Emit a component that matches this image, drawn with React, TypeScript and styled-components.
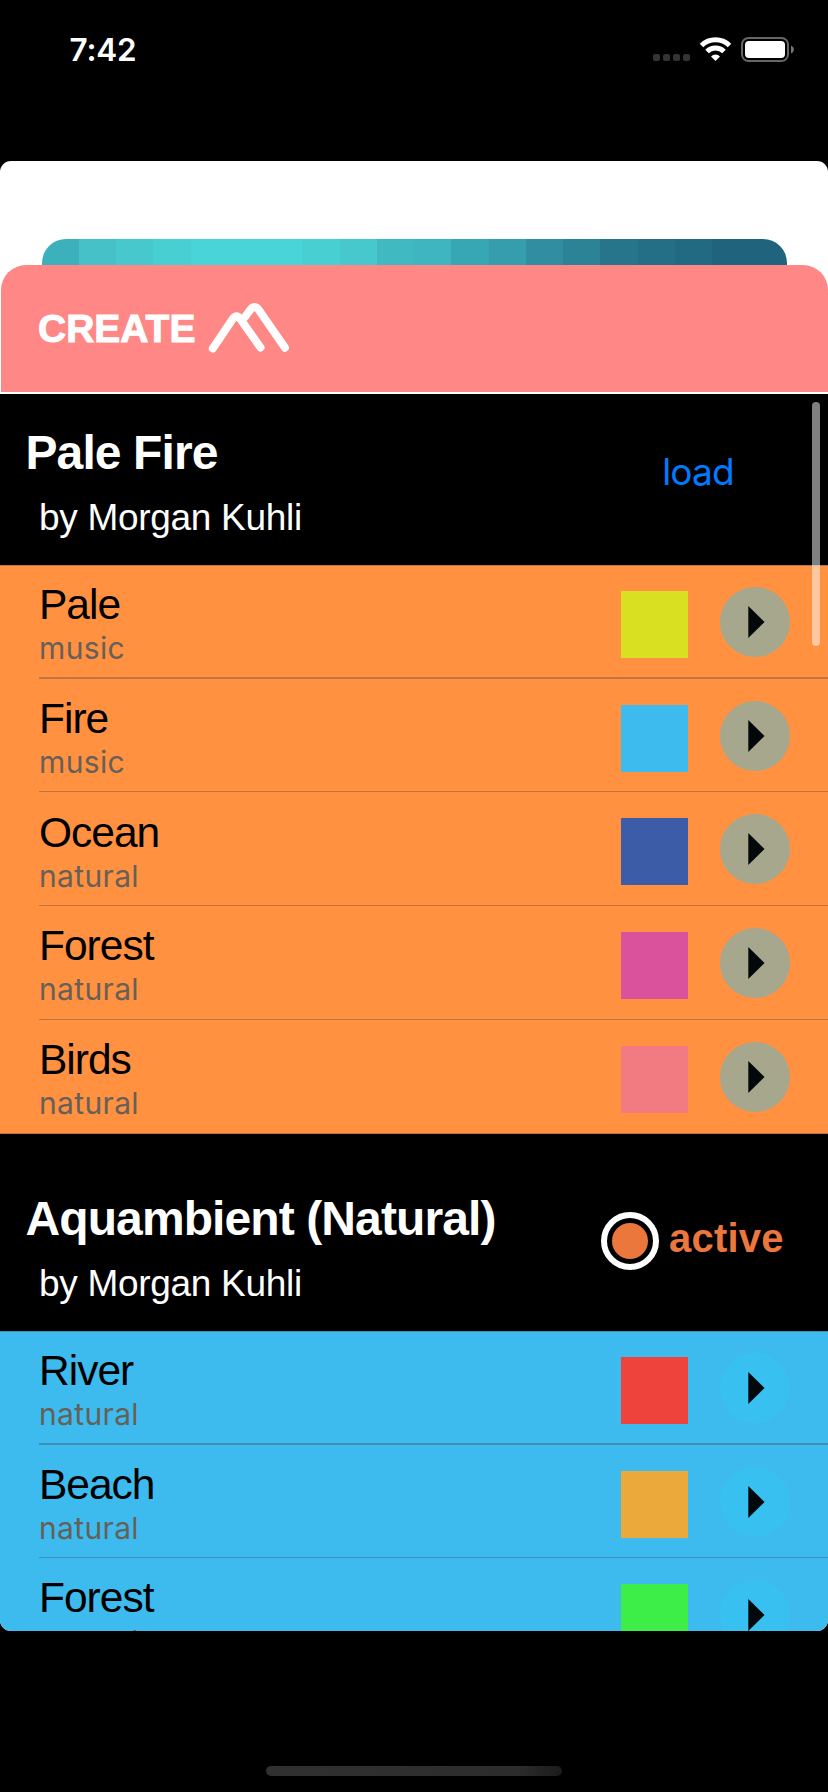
import React from 'react';
import styled, { createGlobalStyle } from 'styled-components';

const GlobalStyle = createGlobalStyle`
  * { box-sizing: border-box; }
  body { margin: 0; background: #000; font-family: "Liberation Sans", Arial, sans-serif; }
`;

const Screen = styled.div`
  position: relative;
  display: flex;
  flex-direction: column;
  width: 828px;
  height: 1792px;
  background: #000;
  overflow: hidden;
`;

const StatusBar = styled.header`
  display: flex;
  justify-content: space-between;
  align-items: flex-start;
  flex: none;
  height: 161px;
  padding: 30px 34px 0 69.5px;
`;

const Clock = styled.time`
  font: 600 31.5px/40px Inter, sans-serif;
  letter-spacing: -0.2px;
  color: #fff;
`;

const StatusIcons = styled.svg`
  display: block;
  margin-top: 5px;
`;

const Card = styled.main`
  position: relative;
  display: flex;
  flex-direction: column;
  flex: none;
  height: 1470px;
  padding-top: 78px;
  background: #fff;
  border-radius: 11px;
  overflow: hidden;
`;

const Stripes = styled.div`
  display: flex;
  flex: none;
  height: 26px;
  margin: 0 41.5px;
  border-radius: 24px 24px 0 0;
  overflow: hidden;
`;

const Stripe = styled.span<{ $color: string }>`
  flex: 1;
  background: ${p => p.$color};
`;

const CreateBar = styled.div`
  display: flex;
  align-items: flex-start;
  flex: none;
  height: 127.4px;
  margin: 0 0 1.6px 1px;
  padding: 36px 0 0 37px;
  background: #ff8786;
  border-radius: 25px 25px 0 0;
`;

const CreateTitle = styled.h1`
  margin: 5px 0 0;
  width: 170px;
  font-size: 39px;
  line-height: 46px;
  color: #fff;
  -webkit-text-stroke: 1px #fff;
`;

const GroupHeader = styled.div<{ $tall?: boolean }>`
  display: flex;
  justify-content: space-between;
  flex: none;
  height: ${p => (p.$tall ? 197.1 : 171)}px;
  padding-top: ${p => (p.$tall ? 60.3 : 34.5)}px;
  background: #000;
`;

const GroupText = styled.div`
  padding-left: 25.5px;
`;

const GroupName = styled.h2`
  margin: 0;
  font-size: 48px;
  line-height: 50px;
  letter-spacing: -0.9px;
  color: #fff;
  white-space: nowrap;
`;

const Author = styled.p`
  margin: 18.7px 0 0 13.5px;
  font-size: 37px;
  line-height: 42px;
  letter-spacing: -0.3px;
  color: #fff;
  white-space: nowrap;
`;

const LoadButton = styled.button`
  align-self: flex-start;
  width: 76px;
  margin: 18px 92px 0 0;
  padding: 0;
  border: 0;
  background: none;
  font: 400 37px/52px Inter, sans-serif;
  letter-spacing: -0.8px;
  color: #007aff;
`;

const ActiveBadge = styled.div`
  display: flex;
  align-items: flex-start;
  width: 227px;
  padding-top: 18px;
`;

const Ring = styled.span`
  display: flex;
  align-items: center;
  justify-content: center;
  width: 58px;
  height: 58px;
  border: 6.5px solid #fff;
  border-radius: 50%;
  &::after {
    content: '';
    width: 36px;
    height: 36px;
    border-radius: 50%;
    background: #eb773c;
  }
`;

const ActiveLabel = styled.span`
  margin: 4px 0 0 10px;
  font-size: 40px;
  font-weight: 700;
  line-height: 44px;
  letter-spacing: 0.2px;
  color: #eb773c;
`;

const List = styled.ul<{ $color: string }>`
  flex: none;
  margin: 0;
  padding: 0;
  list-style: none;
  background: ${p => p.$color};
  box-shadow: inset 0 1px rgba(60, 60, 67, 0.33), inset 0 -1px rgba(60, 60, 67, 0.33);
`;

const Row = styled.li`
  display: flex;
  align-items: flex-start;
  height: 113.75px;
  padding-left: 39px;
`;

const RowBody = styled.div<{ $line: number }>`
  display: flex;
  align-items: flex-start;
  width: 789px;
  height: 113.75px;
  border-bottom: ${p => p.$line}px solid rgba(60, 60, 67, 0.33);
`;

const Labels = styled.div`
  width: 582px;
  padding: 16.1px 0 0;
`;

const Name = styled.div`
  font-size: 42.5px;
  line-height: 48px;
  letter-spacing: -1px;
  color: #000;
`;

const Kind = styled.div`
  font: 400 30px/38px Inter, sans-serif;
  letter-spacing: 0.35px;
  color: #666058;
`;

const Swatch = styled.span<{ $color: string }>`
  width: 67px;
  height: 67px;
  margin-top: 26px;
  background: ${p => p.$color};
`;

const PlayButton = styled.button<{ $color: string }>`
  width: 70px;
  height: 70px;
  margin: 22px 0 0 31.5px;
  padding: 0;
  border: 0;
  border-radius: 50%;
  background: ${p => p.$color};
`;

const ScrollThumb = styled.div`
  position: absolute;
  top: 241px;
  right: 8px;
  width: 8px;
  height: 244px;
  border-radius: 4px;
  background: rgba(255, 255, 255, 0.5);
`;

const HomeIndicator = styled.div`
  width: 296px;
  height: 10px;
  margin: 135px auto 0;
  border-radius: 5px;
  background: linear-gradient(100deg, #303030 0%, #2c2c2c 85%, #1b1b1b 100%);
`;

const stripeColors = [
  '#3db1bb', '#45c1c7', '#47c8cc', '#48cfd2', '#49d5d8', '#49d5d8', '#49d5d8', '#48cfd2', '#46c8cd', '#41b9c1',
  '#3fb5bf', '#38a7b4', '#359dab', '#308ea0', '#2c8396', '#27758b', '#246f86', '#216a82', '#1f637c', '#1f637c',
];

interface Sound { name: string; kind: string; color: string }

const paleFire: Sound[] = [
  { name: 'Pale', kind: 'music', color: '#d9e021' },
  { name: 'Fire', kind: 'music', color: '#3dbbee' },
  { name: 'Ocean', kind: 'natural', color: '#3c5ca8' },
  { name: 'Forest', kind: 'natural', color: '#d9529b' },
  { name: 'Birds', kind: 'natural', color: '#f17b80' },
];

const aquambient: Sound[] = [
  { name: 'River', kind: 'natural', color: '#ee423d' },
  { name: 'Beach', kind: 'natural', color: '#eba93b' },
  { name: 'Forest', kind: 'natural', color: '#3dee49' },
];

function SoundList({ sounds, color, playColor }: { sounds: Sound[]; color: string; playColor: string }) {
  return (
    <List $color={color}>
      {sounds.map((s, i) => (
        <Row key={s.name}>
          <RowBody $line={i === 0 ? 2 : i === sounds.length - 1 ? 0 : 1}>
            <Labels>
              <Name>{s.name}</Name>
              <Kind>{s.kind}</Kind>
            </Labels>
            <Swatch $color={s.color} />
            <PlayButton $color={playColor} aria-label={`Play ${s.name}`}>
              <svg width="70" height="70" viewBox="0 0 70 70" display="block">
                <path d="M28.3 19V51L44.5 35Z" fill="#03080a" />
              </svg>
            </PlayButton>
          </RowBody>
        </Row>
      ))}
    </List>
  );
}

export default function App() {
  return (
    <Screen>
      <GlobalStyle />
      <StatusBar>
        <Clock>7:42</Clock>
        <StatusIcons width="142" height="28" viewBox="0 0 142 28">
          <g fill="#343434">
            {[0, 10, 20, 30].map(x => (
              <rect key={x} x={1 + x} y="19" width="7" height="7" rx="2" />
            ))}
          </g>
          <g fill="none" stroke="#fff" strokeWidth="5">
            <path d="M49.5 10.5A20 20 0 0 1 77.5 10.5" />
            <path d="M55 16.5A12.2 12.2 0 0 1 72 16.5" />
          </g>
          <path d="M63.5 26L59 21.4A6.3 6.3 0 0 1 68 21.4Z" fill="#fff" />
          <rect x="90" y="3" width="46" height="23" rx="6.5" fill="none" stroke="#666" strokeWidth="2" />
          <rect x="93" y="6" width="40" height="17" rx="4" fill="#fff" />
          <path d="M139 10.5Q142 12 142 14.5T139 18.5Z" fill="#777" />
        </StatusIcons>
      </StatusBar>
      <Card>
        <Stripes>
          {stripeColors.map((c, i) => <Stripe key={i} $color={c} />)}
        </Stripes>
        <CreateBar>
          <CreateTitle>CREATE</CreateTitle>
          <svg width="82" height="52" viewBox="0 0 82 52">
            <g fill="none" stroke="#fff" strokeWidth="8" strokeLinecap="round" strokeLinejoin="round">
              <path d="M4.8 47.5L25 17.5Q28.5 13 32 17.5L52.5 46.5" />
              <path d="M37 16L42.5 8.5Q46.5 3.5 50.5 8.5L77 46.7" />
            </g>
          </svg>
        </CreateBar>
        <GroupHeader>
          <GroupText>
            <GroupName>Pale Fire</GroupName>
            <Author>by Morgan Kuhli</Author>
          </GroupText>
          <LoadButton>load</LoadButton>
        </GroupHeader>
        <SoundList sounds={paleFire} color="#ff9141" playColor="#a7a78e" />
        <GroupHeader $tall>
          <GroupText>
            <GroupName>Aquambient (Natural)</GroupName>
            <Author>by Morgan Kuhli</Author>
          </GroupText>
          <ActiveBadge>
            <Ring />
            <ActiveLabel>active</ActiveLabel>
          </ActiveBadge>
        </GroupHeader>
        <SoundList sounds={aquambient} color="#3dbbee" playColor="#38c0f1" />
        <ScrollThumb />
      </Card>
      <HomeIndicator />
    </Screen>
  );
}
